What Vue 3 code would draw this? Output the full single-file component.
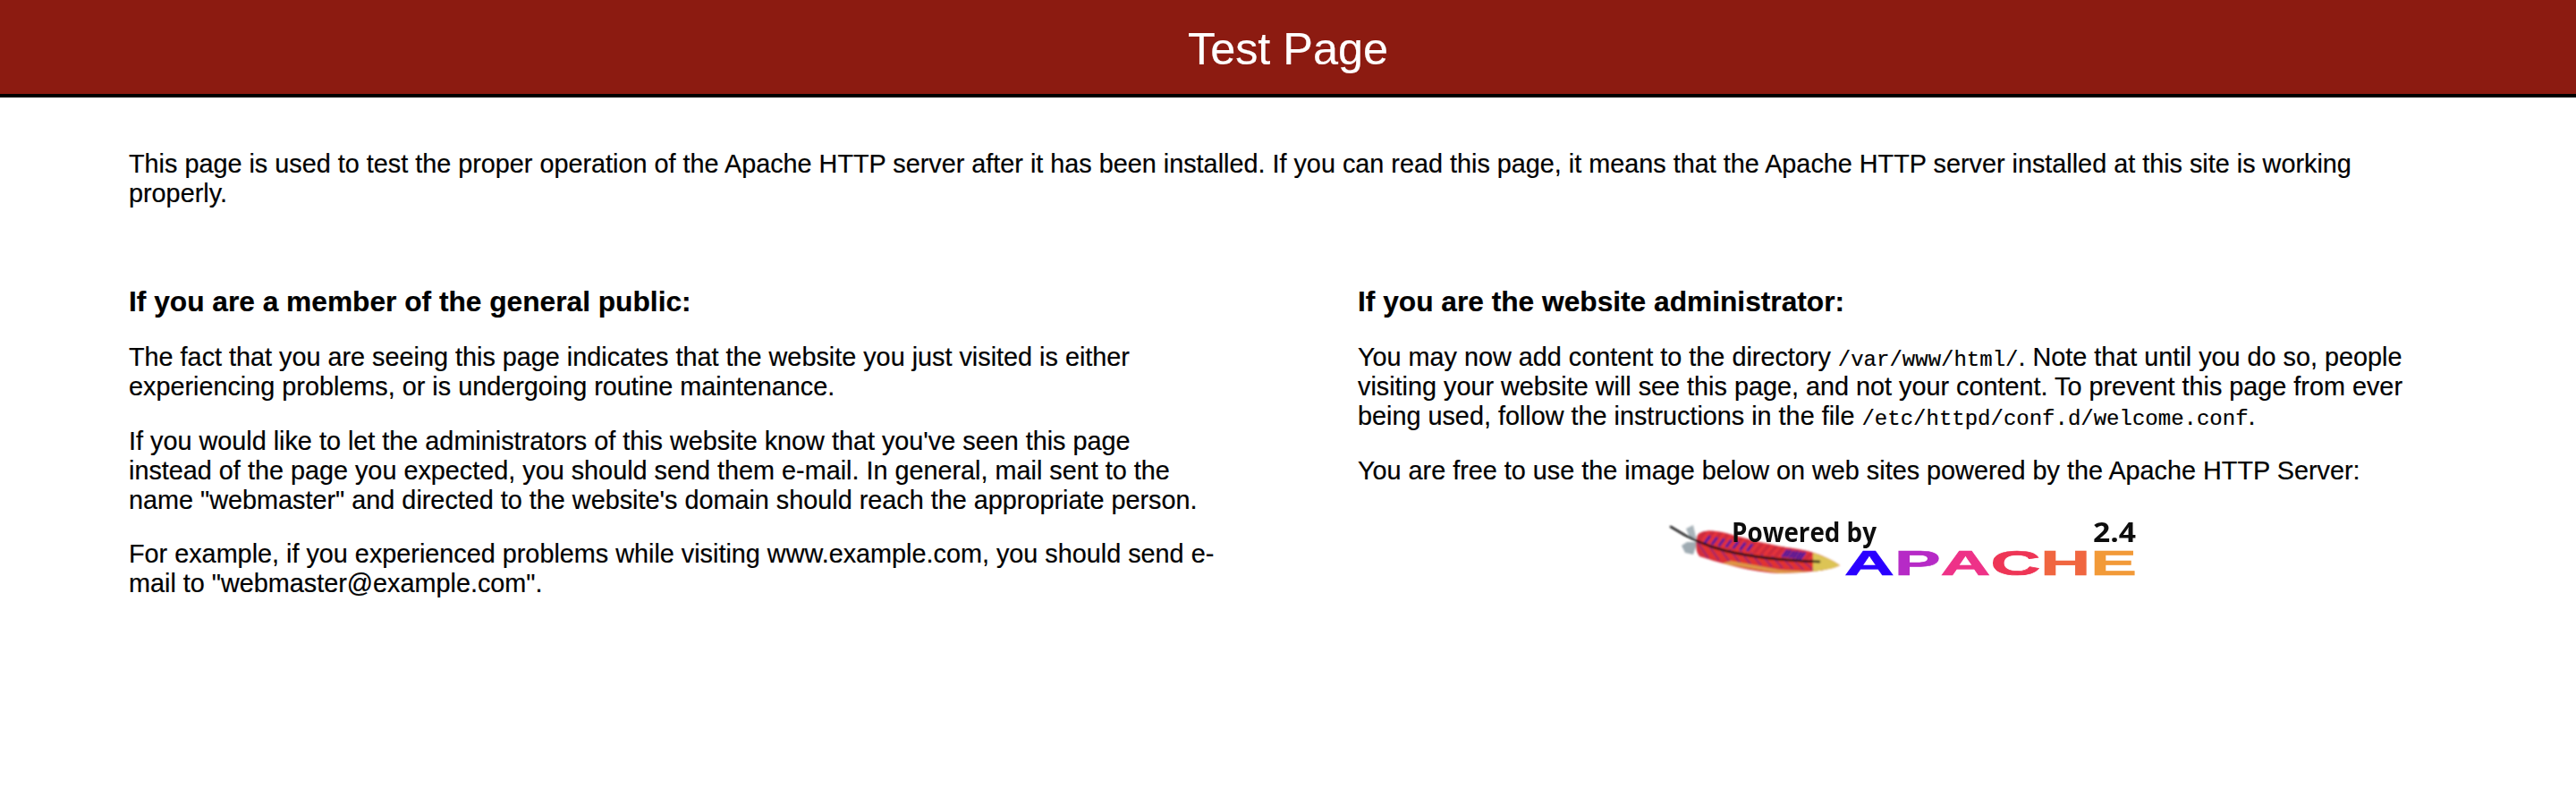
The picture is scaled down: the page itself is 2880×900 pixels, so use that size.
<script setup>
const barbs = []
for (let i = 0; i < 34; i++) {
  const t = i / 33
  const x = 1898 + t * 130
  const sy = 606 + 23 * Math.pow(t, 0.85)
  const purpleUp = (t > 0.05 && t < 0.45 && i % 2 === 0) || (t > 0.72 && t < 0.88)
  barbs.push({ id: 'u' + i, d: `M${x} ${sy}L${x + 10} ${sy - 15 + 6 * t}`, c: i % 2 ? '#e8323a' : '#c92b3e', w: 2.4 })
  if (purpleUp) barbs.push({ id: 'p' + i, d: `M${x} ${sy - 1}L${x + 6} ${sy - 9}`, c: '#4f1e9e', w: 3 })
  barbs.push({ id: 'l' + i, d: `M${x} ${sy}L${x + 12} ${sy + 18 - 8 * t}`, c: i % 3 === 0 ? '#a92a66' : '#e4332f', w: 2.4 })
}
</script>

<template>
  <div class="page">
    <header class="banner"><h1>Test Page</h1></header>
    <main class="content">
      <p class="intro">This page is used to test the proper operation of the Apache HTTP server after it has been installed. If you can read this page, it means that the Apache HTTP server installed at this site is working properly.</p>
      <div class="columns">
        <section class="col">
          <h2>If you are a member of the general public:</h2>
          <p>The fact that you are seeing this page indicates that the website you just visited is either experiencing problems, or is undergoing routine maintenance.</p>
          <p>If you would like to let the administrators of this website know that you've seen this page instead of the page you expected, you should send them e-mail. In general, mail sent to the name "webmaster" and directed to the website's domain should reach the appropriate person.</p>
          <p>For example, if you experienced problems while visiting www.example.com, you should send e-mail to "webmaster@example.com".</p>
        </section>
        <section class="col">
          <h2>If you are the website administrator:</h2>
          <p>You may now add content to the directory <code>/var/www/html/</code>. Note that until you do so, people visiting your website will see this page, and not your content. To prevent this page from ever being used, follow the instructions in the file <code>/etc/httpd/conf.d/welcome.conf</code>.</p>
          <p>You are free to use the image below on web sites powered by the Apache HTTP Server:</p>
          <div class="logo">
            <svg width="554" height="85" viewBox="1850 580 554 85" role="img" aria-label="Powered by Apache 2.4">
              <defs>
                <filter id="soft" x="-5%" y="-20%" width="110%" height="140%"><feGaussianBlur stdDeviation="0.8" /></filter>
                <filter id="softer" x="-5%" y="-20%" width="110%" height="140%"><feGaussianBlur stdDeviation="0.6" /></filter>
                <clipPath id="feather"><path d="M1897 601C1898 592 1915 592 1930 596C1955 603 1985 611 2005 613C2028 616 2048 625 2057 632C2048 637 2025 640 1990 641C1960 640 1925 630 1900 622C1895 616 1896 608 1897 601Z" /></clipPath>
              </defs>
              <g filter="url(#soft)">
                <path d="M1893 587L1896 600L1903 603L1889 601L1885 591Z" fill="#a9b4ba" />
                <path d="M1898 606L1893 620L1884 618L1880 610L1886 606Z" fill="#9fabb2" />
                <path d="M1897 601C1898 592 1915 592 1930 596C1955 603 1985 611 2005 613C2028 616 2048 625 2057 632C2048 637 2025 640 1990 641C1960 640 1925 630 1900 622C1895 616 1896 608 1897 601Z" fill="#d42f3c" />
                <g clip-path="url(#feather)">
                  <path v-for="b in barbs" :key="b.id" :d="b.d" :stroke="b.c" :stroke-width="b.w" fill="none" />
                  <path d="M1925 630L1990 641L2030 639L1990 637L1935 627Z" fill="#e2c24c" opacity=".7" />
                  <path d="M2027 618C2040 622 2050 627 2057 632C2048 637 2038 638 2027 639Z" fill="#dcc455" />
                </g>
                <path d="M1868 589C1885 600 1905 610 1930 616C1960 623 2000 627 2034 628" stroke="#0c0a0e" stroke-width="2.6" fill="none" stroke-linecap="round" />
              </g>
              <g filter="url(#softer)">
                <text class="powered" x="1936" y="606" textLength="162" lengthAdjust="spacingAndGlyphs">Powered by</text>
                <text class="version" x="2340" y="606" textLength="48" lengthAdjust="spacingAndGlyphs">2.4</text>
                <text class="apache" transform="translate(2062 643) scale(2.01 1)" x="0" y="0">
                  <tspan fill="#2a00ff" stroke="#2a00ff">A</tspan><tspan fill="#b62cc6" stroke="#b62cc6">P</tspan><tspan fill="#ee3388" stroke="#ee3388">A</tspan><tspan fill="#ee3556" stroke="#ee3556">C</tspan><tspan fill="#f06640" stroke="#f06640">H</tspan><tspan fill="#f29a38" stroke="#f29a38">E</tspan>
                </text>
              </g>
            </svg>
          </div>
        </section>
      </div>
    </main>
  </div>
</template>

<style>
html, body { margin: 0; background: #fff; }
</style>

<style scoped>
.page {
  width: 2880px;
  min-height: 900px;
  background: #fff;
  color: #000;
  font-family: "Liberation Sans", Arial, sans-serif;
  font-size: 28.8px;
  line-height: 33px;
  -webkit-text-stroke: 0.2px currentColor;
}
.banner {
  height: 105px;
  background: #8c1b11;
  border-bottom: 4px solid #000;
  display: flex;
  align-items: center;
  justify-content: center;
}
h1 {
  margin: 5px 0 0;
  color: #fff;
  font-size: 50.4px;
  font-weight: 400;
  line-height: 1;
}
.content { padding: 58px 144px 0; }
.intro { margin: 0 0 86px; }
.columns { display: flex; gap: 156px; }
.col { width: 1218px; flex: none; }
h2 {
  margin: 0 0 28px;
  font-size: 31.7px;
  line-height: 36px;
  font-weight: 700;
}
p { margin: 0 0 27.5px; }
code { font-family: "Liberation Mono", "Courier New", monospace; font-size: 24px; line-height: 0; }
.logo { display: flex; justify-content: center; padding-top: 10px; }
.powered, .version { font-family: "Open Sans", sans-serif; font-weight: 700; font-size: 30px; fill: #111; }
.apache { font-family: "Liberation Sans", sans-serif; font-weight: 700; font-size: 38.5px; stroke-width: 0.7px; }
</style>
